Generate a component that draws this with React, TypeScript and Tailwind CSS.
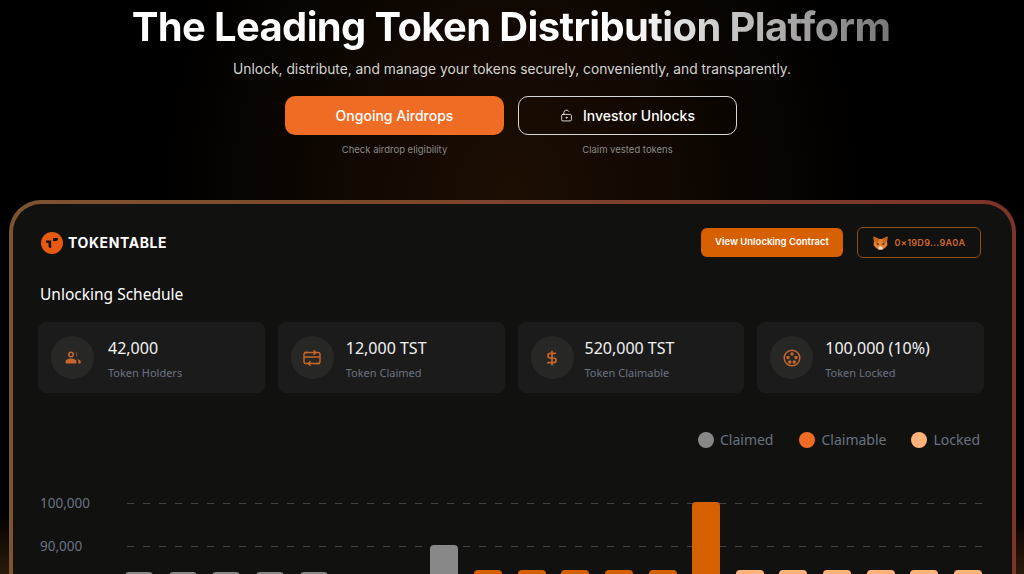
import { LockKeyholeOpen, DollarSign } from 'lucide-react';

const stats = [
  { value: '42,000', label: 'Token Holders', icon: 'users', gap: 'gap-[14px]' },
  { value: '12,000 TST', label: 'Token Claimed', icon: 'swap', gap: 'gap-[12px]' },
  { value: '520,000 TST', label: 'Token Claimable', icon: 'dollar', gap: 'gap-[11px]' },
  { value: '100,000 (10%)', label: 'Token Locked', icon: 'locked', gap: 'gap-[12px]' },
];

// the rest of the axis is below the fold
const axis = ['100,000', '90,000'];

const bars = [
  { h: 361, c: 'bg-[#888888]' },
  { h: 361, c: 'bg-[#888888]' },
  { h: 361, c: 'bg-[#888888]' },
  { h: 361, c: 'bg-[#888888]' },
  { h: 361, c: 'bg-[#888888]' },
  { h: 0, c: '' },
  { h: 0, c: '' },
  { h: 388, c: 'bg-[#888888]' },
  { h: 363, c: 'bg-[#d65f00]' },
  { h: 363, c: 'bg-[#d65f00]' },
  { h: 363, c: 'bg-[#d65f00]' },
  { h: 363, c: 'bg-[#d65f00]' },
  { h: 363, c: 'bg-[#d65f00]' },
  { h: 431, c: 'bg-[#d65f00]' },
  { h: 363, c: 'bg-[#ffb27a]' },
  { h: 363, c: 'bg-[#ffb27a]' },
  { h: 363, c: 'bg-[#ffb27a]' },
  { h: 363, c: 'bg-[#ffb27a]' },
  { h: 363, c: 'bg-[#ffb27a]' },
  { h: 363, c: 'bg-[#ffb27a]' },
];

function StatIcon({ name }: { name: string }) {
  if (name === 'users') {
    return (
      <svg width="16" height="14" viewBox="0 0 16 14" fill="#c8662a">
        <path d="M6 0.500a3 3 0 1 1 0 6 3 3 0 0 1 0-6zm0 1.500a1.500 1.500 0 1 0 0 3 1.500 1.500 0 0 0 0-3z" fillRule="evenodd" />
        <path d="M10.500 0.800a3 3 0 0 1 0 5.400c0.700-0.800 1-1.700 1-2.700s-0.300-1.900-1-2.700z" />
        <path d="M0.500 11c0-2 2.200-3.500 5.500-3.500s5.500 1.500 5.500 3.500c0 1-0.600 1.500-1.500 1.500H2c-0.900 0-1.500-0.500-1.500-1.500z" />
        <path d="M12 8c2.200 0.300 3.800 1.500 3.800 3 0 1-0.600 1.500-1.300 1.500h-1.300c0.200-0.500 0.300-1 0.300-1.500 0-1.100-0.600-2.200-1.500-3z" />
      </svg>
    );
  }
  if (name === 'dollar') return <DollarSign size={16} strokeWidth={2.600} className="text-[#c8662a]" />;
  if (name === 'swap') {
    return (
      <svg width="18" height="18" viewBox="0 0 18 18" fill="none" stroke="#c8662a" strokeWidth="1.400">
        <path d="M5 3.500H3a2 2 0 0 0-2 2v7a2 2 0 0 0 2 2h2M13 3.500h2a2 2 0 0 1 2 2v7a2 2 0 0 1-2 2h-2" />
        <path d="M1 8h16M1 3.500h12M10.500 1.200l2.500 2.300-2.500 2.300M17 14.500H5M7.500 12.200 5 14.500l2.500 2.300" />
      </svg>
    );
  }
  return (
    <svg width="18" height="18" viewBox="0 0 18 18" fill="none" stroke="#c8662a" strokeWidth="1.500">
      <circle cx="9" cy="9" r="7.800" />
      <circle cx="9" cy="5" r="1" fill="#c8662a" />
      <circle cx="5" cy="8.500" r="1" fill="#c8662a" />
      <circle cx="13" cy="8.500" r="1" fill="#c8662a" />
      <circle cx="6.800" cy="13" r="1" fill="#c8662a" />
      <circle cx="11.200" cy="13" r="1" fill="#c8662a" />
    </svg>
  );
}

function FoxIcon() {
  return (
    <svg width="15" height="14" viewBox="0 0 15 14">
      <path d="M0.500 0.500 6 3h3l5.500-2.500L14 6l0.500 3-2.500 3-3 1.500H6L3 12 0.500 9 1 6z" fill="#e8822a" />
      <path d="M0.500 0.500 6 3 5 7 1 6zM14.500 0.500 9 3l1 4 4-1z" fill="#c9651a" />
      <path d="M5 13.500 6 10.500h3l1 3z" fill="#e4e0dc" />
      <path d="M3.500 7l2 0.500L6 9 3.800 8.500zM11.500 7l-2 0.500L9 9l2.200-0.500z" fill="#3a2a20" />
    </svg>
  );
}

export default function App() {
  return (
    <div className="h-[574px] w-[1024px] overflow-hidden bg-[linear-gradient(180deg,transparent_510px,#2b1a0c_574px),radial-gradient(ellipse_360px_420px_at_50%_190px,#1d0e03,#000000)] font-['Inter',sans-serif] text-white">
      <div className="flex flex-col items-center">
        <h1 className="mt-[3px] mr-[2px] bg-linear-to-r from-white from-65% to-[#777777] bg-clip-text text-[40px] leading-[48px] font-bold tracking-[-0.650px] text-transparent">
          The Leading Token Distribution Platform
        </h1>
        <p className="mt-[8px] text-[13.800px] leading-[20px] text-[#d4d4d4]">
          Unlock, distribute, and manage your tokens securely, conveniently, and transparently.
        </p>
        <div className="mt-[17px] mr-[2px] flex gap-[14px]">
          <div className="flex w-[219px] flex-col items-center">
            <button
              type="button"
              className="flex h-[39px] w-full items-center justify-center rounded-[10px] bg-[#ef6c25] text-[14px] font-medium"
            >
              Ongoing Airdrops
            </button>
            <span className="mt-[8px] text-[9.500px] leading-[14px] text-[#8a8a8a]">Check airdrop eligibility</span>
          </div>
          <div className="flex w-[219px] flex-col items-center">
            <button
              type="button"
              className="flex h-[39px] w-full items-center justify-center gap-[10px] rounded-[10px] border border-[#d8d8d8] text-[14px] font-medium"
            >
              <LockKeyholeOpen size={13} strokeWidth={1.500} />
              Investor Unlocks
            </button>
            <span className="mt-[8px] text-[9.500px] leading-[14px] text-[#8a8a8a]">Claim vested tokens</span>
          </div>
        </div>
      </div>

      <div className="mt-[43px] ml-[9px] w-[1007px] rounded-[32px] bg-linear-to-r from-[#7d5330] to-[#7c3428] p-[4px]">
        <div className="rounded-[28px] bg-[#111110] pt-[23px] pr-[27px] pb-[20px] pl-[25px]">
          <div className="flex items-center justify-between pr-[4px] pl-[3px]">
            <div className="flex items-center gap-[5px]">
              <svg width="22" height="22" viewBox="0 0 22 22">
                <circle cx="11" cy="11" r="11" fill="#e85a10" />
                <path d="M5 8.500h5.200V16h-0.700C8 16 7.500 15 7.500 13.500V11H6C5.300 11 5 10 5 8.500Z M12 6h5c0 1.800-0.700 3-2 3h-3z" fill="#141210" />
              </svg>
              <span className="text-[14px] font-bold tracking-[0.600px]">TOKENTABLE</span>
            </div>
            <div className="flex items-center gap-[14px]">
              <button
                type="button"
                className="flex h-[29px] w-[142px] items-center justify-center rounded-[6px] bg-[#d65f00] text-[9.500px] font-semibold"
              >
                View Unlocking Contract
              </button>
              <button
                type="button"
                className="flex h-[31px] w-[124px] items-center justify-center gap-[7px] rounded-[6px] border border-[#8a4e22] text-[9px] font-semibold tracking-[0.300px] text-[#d0682a]"
              >
                <FoxIcon />
                0×19D9...9A0A
              </button>
            </div>
          </div>

          <h2 className="mt-[25px] pl-[2px] font-['Noto_Sans',sans-serif] text-[15.500px] leading-[22px] font-normal">
            Unlocking Schedule
          </h2>

          <div className="mt-[17px] mr-[1px] grid grid-cols-4 gap-[13px]">
            {stats.map((s) => (
              <div key={s.label} className={`flex h-[71px] items-center ${s.gap} rounded-[8px] bg-[#1b1b1b] pl-[13px]`}>
                <div className="flex h-[43px] w-[43px] items-center justify-center rounded-full bg-[#272726]">
                  <StatIcon name={s.icon} />
                </div>
                <div className="flex flex-col gap-[7px] pt-[2px] font-['Noto_Sans',sans-serif]">
                  <span className="text-[16px] leading-[20px] font-normal text-[#f2f2f2]">{s.value}</span>
                  <span className="text-[11px] leading-[15px] text-[#6b7280]">{s.label}</span>
                </div>
              </div>
            ))}
          </div>

          <div className="mt-[37px] flex justify-end gap-[25px] pr-[5px] font-['Noto_Sans',sans-serif] text-[14px] leading-[20px] text-[#6b7280]">
            <span className="mr-[1px] flex items-center gap-[6px]">
              <i className="h-[16px] w-[16px] rounded-full bg-[#888888]" />
              Claimed
            </span>
            <span className="flex items-center gap-[6px]">
              <i className="h-[16px] w-[16px] rounded-full bg-[#ef6c25]" />
              Claimable
            </span>
            <span className="flex items-center gap-[6px]">
              <i className="h-[16px] w-[16px] rounded-full bg-[#ffb27a]" />
              Locked
            </span>
          </div>

          <div className="relative mt-[53px] mr-[3px] h-[430px] pl-[2px] font-['Noto_Sans',sans-serif]">
            {axis.map((a) => (
              <div key={a} className="flex h-[43px] items-start">
                <span className="-mt-[10px] w-[87px] text-[13.500px] leading-[20px] text-[#6b7280]">{a}</span>
                <div className="h-px flex-1 bg-[repeating-linear-gradient(90deg,#444444_0,#444444_7px,transparent_7px,transparent_16px)]" />
              </div>
            ))}
            <div className="absolute top-0 right-0 left-[87px] flex h-[430px] items-end justify-between">
              {bars.map((b, i) => (
                <div
                  key={i}
                  className={`w-[28px] rounded-t-[4px] ${b.c}`}
                  style={{ height: b.h }}
                />
              ))}
            </div>
          </div>
        </div>
      </div>
    </div>
  );
}
